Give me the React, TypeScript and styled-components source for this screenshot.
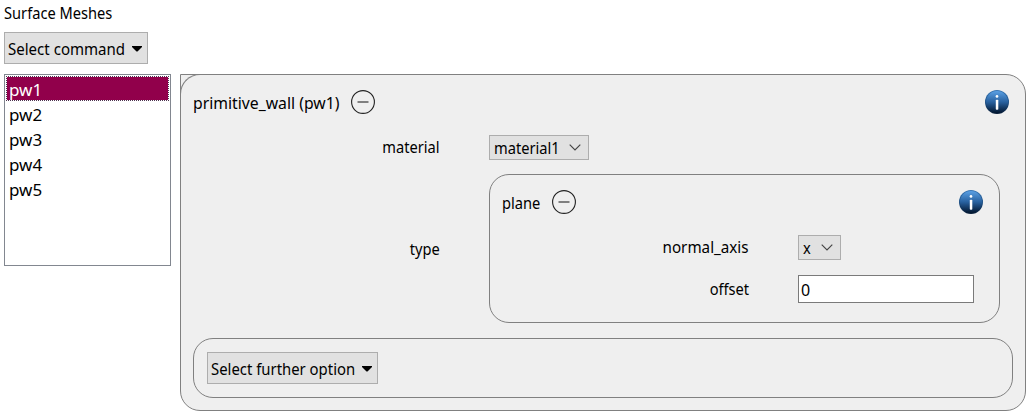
import React from "react";
import styled, { createGlobalStyle, css } from "styled-components";

const GlobalStyle = createGlobalStyle`
  *, *::before, *::after { box-sizing: border-box; }
  body {
    margin: 0;
    background: #fff;
    color: #000;
    font: 16px/20px "Noto Sans", "Open Sans", sans-serif;
    overflow: hidden;
  }
`;

const Page = styled.main`
  width: 1031px;
  height: 416px;
  padding: 3px 5px 5px 4px;
`;

const Text = styled.span<{ $size?: number; $scale?: number; $end?: boolean }>`
  display: inline-block;
  min-width: 0;
  font-size: ${(p) => p.$size ?? 16}px;
  transform: scaleX(${(p) => p.$scale ?? 0.915});
  transform-origin: ${(p) => (p.$end ? "right" : "left")} center;
  white-space: nowrap;
`;

const Title = styled.div`
  height: 29px;
  line-height: 20px;
`;

const MenuButton = styled.button<{ $width: number }>`
  display: flex;
  align-items: center;
  justify-content: space-between;
  width: ${(p) => p.$width}px;
  height: 32px;
  padding: 1px 5px 0 3px;
  border: 1px solid #adadad;
  background: #e1e1e1;
  color: #000;
  font: inherit;
`;

const Columns = styled.div`
  display: flex;
  align-items: flex-start;
  gap: 9px;
  margin-top: 10px;
`;

const List = styled.ul`
  width: 167px;
  height: 192px;
  margin: 0;
  padding: 1px;
  border: 1px solid #828790;
  list-style: none;
`;

const ListItem = styled.li<{ $selected?: boolean }>`
  height: 25px;
  padding: 1px 0 0 2px;
  line-height: 24px;
  border: 1px solid transparent;
  ${(p) =>
    p.$selected &&
    css`
      color: #fff;
      background: #91004b;
      background-clip: padding-box;
      border: 1px dotted #4d3350;
    `}
`;

const Panel = styled.section`
  position: relative;
  width: 846px;
  height: 337px;
  padding: 15px 12px 12px;
  border: 1px solid #808080;
  border-radius: 0 20px 20px 20px;
  background: #efefef;

  &::before {
    content: "";
    position: absolute;
    top: -1px;
    left: -1px;
    width: 20px;
    height: 20px;
    border: solid #808080;
    border-width: 1px 0 0 1px;
    border-radius: 20px 0 0 0;
  }
`;

const Header = styled.header<{ $inset: number }>`
  display: flex;
  align-items: center;
  height: 24px;
  margin-right: ${(p) => p.$inset}px;

  & > :last-child {
    margin-left: auto;
  }
`;

const HeaderLabel = styled.div<{ $width: number }>`
  width: ${(p) => p.$width}px;
  padding-top: 1px;
`;

const Fields = styled.div<{ $label: number; $gap: number; $top: number }>`
  display: grid;
  grid-template-columns: ${(p) => p.$label}px 1fr;
  column-gap: 49px;
  row-gap: ${(p) => p.$gap}px;
  align-items: center;
  margin-top: ${(p) => p.$top}px;
`;

const FieldLabel = styled.label<{ $low?: boolean }>`
  padding: ${(p) => (p.$low ? "1px 0 0" : "0 0 1px")};
  text-align: right;
`;

const Group = styled.section`
  width: 511px;
  height: 149px;
  padding: 15px 12px;
  border: 1px solid #808080;
  border-radius: 20px;
`;

const Select = styled.div<{ $width: number }>`
  display: flex;
  align-items: center;
  justify-content: space-between;
  width: ${(p) => p.$width}px;
  height: 25px;
  padding: 0 7px 0 4px;
  border: 1px solid #adadad;
  background: #e1e1e1;
`;

const Input = styled.input`
  width: 176px;
  height: 28px;
  padding: 2px 2px 0;
  border: 1px solid #7a7a7a;
  background: #fff;
  color: #000;
  font: inherit;
  outline: none;
`;

const Options = styled.div`
  height: 60px;
  margin-top: 15px;
  padding: 13px;
  border: 1px solid #808080;
  border-radius: 20px;
`;

const Icon = styled.svg`
  display: block;
  flex: none;
`;

const Caret = () => (
  <Icon width="10" height="6" viewBox="0 0 10 6">
    <path d="M0 0H10V1L5.5 5.5H4.5L0 1Z" />
  </Icon>
);

const Chevron = () => (
  <Icon width="12" height="7" viewBox="0 0 12 7">
    <path d="M.7.7 6 6 11.3.7" fill="none" stroke="#444" strokeWidth="1.15" />
  </Icon>
);

const Collapse = () => (
  <Icon width="24" height="24" viewBox="0 0 24 24">
    <circle cx="12" cy="12" r="11.4" fill="none" stroke="#222" strokeWidth="1.1" />
    <path d="M6.5 12H17.5" stroke="#808080" strokeWidth="2" />
  </Icon>
);

const Info = ({ id }: { id: string }) => (
  <Icon width="24" height="24" viewBox="0 0 24 24">
    <defs>
      <linearGradient id={id} x1="0" y1="0" x2="0" y2="1">
        <stop offset="0" stopColor="#5ba0e4" />
        <stop offset=".5" stopColor="#28619f" />
        <stop offset="1" stopColor="#02162f" />
      </linearGradient>
      <linearGradient id={`${id}-rim`} x1="0" y1="0" x2="0" y2="1">
        <stop offset="0" stopColor="#3977b5" />
        <stop offset=".5" stopColor="#1f5288" />
        <stop offset="1" stopColor="#061b35" />
      </linearGradient>
    </defs>
    <circle cx="12" cy="12" r="12" fill={`url(#${id}-rim)`} />
    <circle cx="12" cy="12" r="11" fill={`url(#${id})`} />
    <circle cx="12" cy="6.4" r="1.35" fill="#fff" />
    <rect x="10.8" y="9.7" width="2.5" height="10" rx=".8" fill="#fff" />
  </Icon>
);

const meshes = ["pw1", "pw2", "pw3", "pw4", "pw5"];

export default function App() {
  return (
    <>
      <GlobalStyle />
      <Page>
        <Title><Text>Surface Meshes</Text></Title>
        <MenuButton $width={144}>
          <Text $scale={0.94}>Select command</Text>
          <Caret />
        </MenuButton>
        <Columns>
          <List>
            {meshes.map((name, i) => (
              <ListItem key={name} $selected={i === 0}>
                <Text $size={17} $scale={1}>{name}</Text>
              </ListItem>
            ))}
          </List>
          <Panel>
            <Header $inset={4}>
              <HeaderLabel $width={158}><Text $scale={0.985}>primitive_wall (pw1)</Text></HeaderLabel>
              <Collapse />
              <Info id="wall-info" />
            </Header>
            <Fields $label={247} $gap={14} $top={21}>
              <FieldLabel><Text $end>material</Text></FieldLabel>
              <Select $width={100}>
                <Text>material1</Text>
                <Chevron />
              </Select>
              <FieldLabel $low><Text $end>type</Text></FieldLabel>
              <Group>
                <Header $inset={4}>
                  <HeaderLabel $width={50}><Text>plane</Text></HeaderLabel>
                  <Collapse />
                  <Info id="plane-info" />
                </Header>
                <Fields $label={247} $gap={15} $top={21}>
                  <FieldLabel><Text $end $scale={0.95}>normal_axis</Text></FieldLabel>
                  <Select $width={43}>
                    <Text>x</Text>
                    <Chevron />
                  </Select>
                  <FieldLabel><Text $end>offset</Text></FieldLabel>
                  <Input defaultValue="0" />
                </Fields>
              </Group>
            </Fields>
            <Options>
              <MenuButton $width={171}>
                <Text $scale={0.93}>Select further option</Text>
                <Caret />
              </MenuButton>
            </Options>
          </Panel>
        </Columns>
      </Page>
    </>
  );
}
